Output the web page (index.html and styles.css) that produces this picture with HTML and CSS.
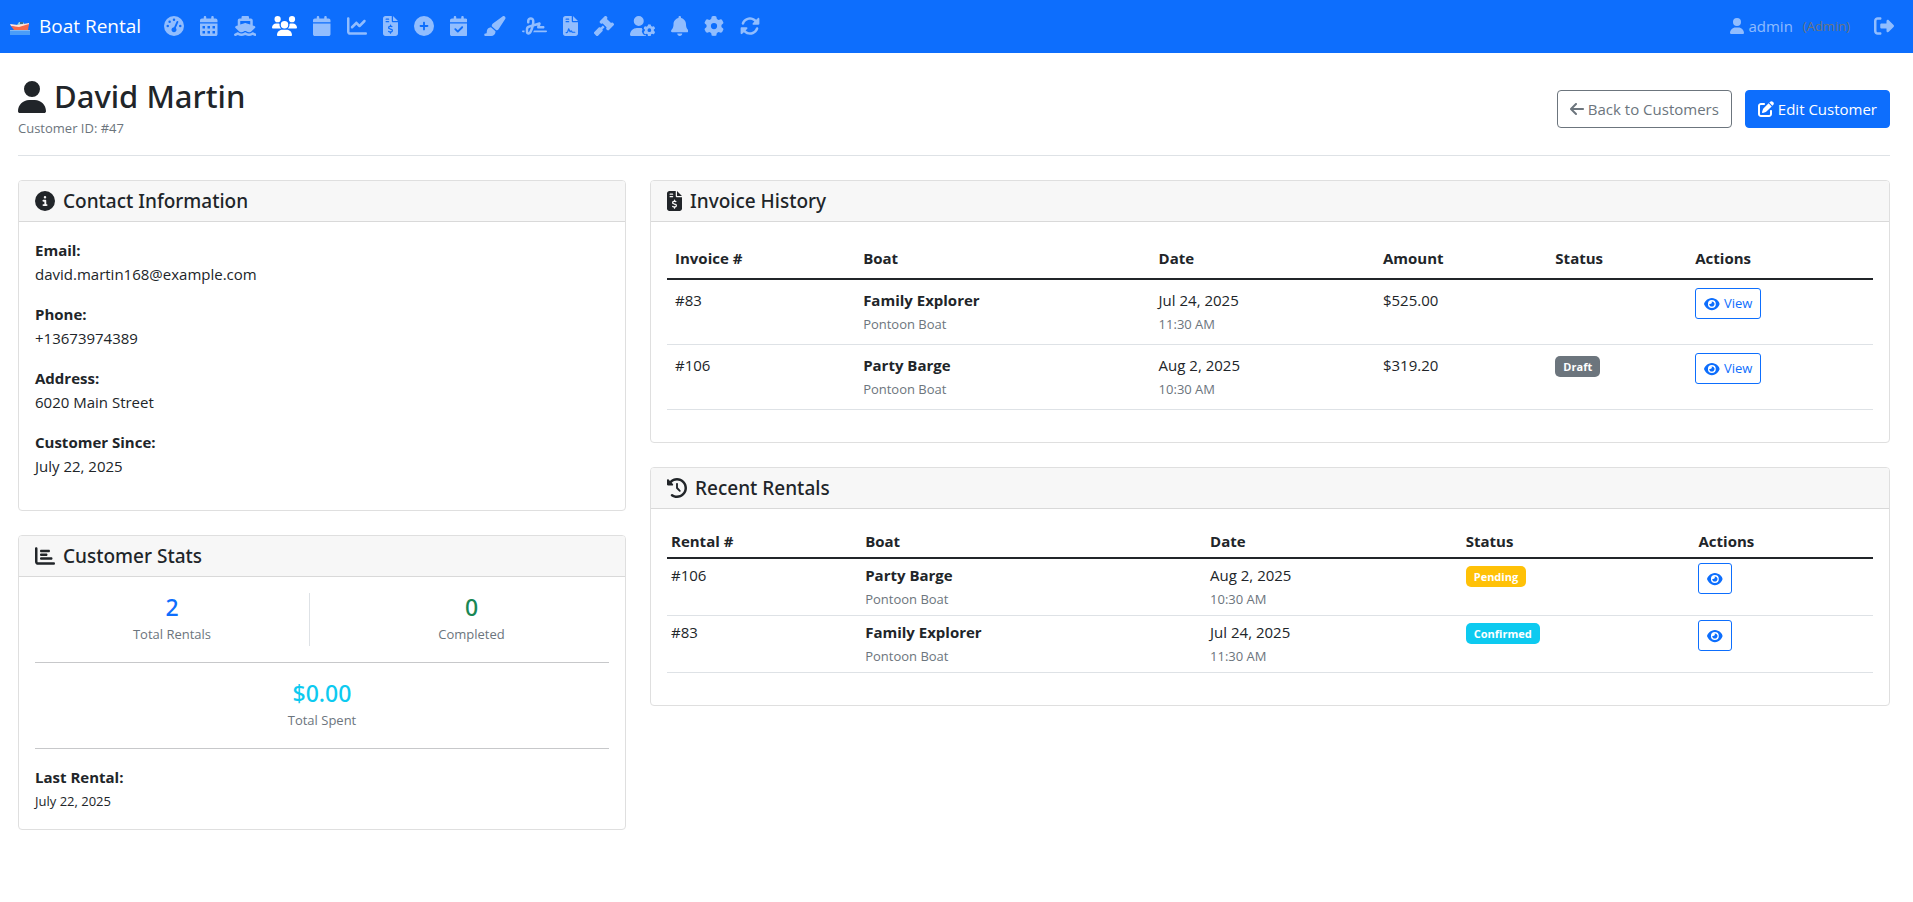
FILE: index.html
```html
<!DOCTYPE html>
<html lang="en">
<head>
    <meta charset="UTF-8">
    <meta name="viewport" content="width=device-width, initial-scale=1.0">
    <title>David Martin - Boat Rental</title>
    <link rel="stylesheet" href="styles.css">
</head>
<body>
<svg class="icon-defs" aria-hidden="true">
    <symbol id="i-user" viewBox="0 0 448 512"><path d="M224 256A128 128 0 1 0 224 0a128 128 0 1 0 0 256zm-45.7 48C79.8 304 0 383.8 0 482.3C0 498.7 13.3 512 29.7 512H418.3c16.4 0 29.7-13.3 29.7-29.7C448 383.8 368.2 304 269.7 304H178.3z"/></symbol>
    <symbol id="i-invoice" viewBox="0 0 384 512"><path d="M64 0C28.7 0 0 28.7 0 64V448c0 35.3 28.7 64 64 64H320c35.3 0 64-28.7 64-64V160H256c-17.7 0-32-14.3-32-32V0H64zM256 0V128H384L256 0zM64 80c0-8.8 7.2-16 16-16h64c8.8 0 16 7.2 16 16s-7.2 16-16 16H80c-8.8 0-16-7.2-16-16zm0 64c0-8.8 7.2-16 16-16h64c8.8 0 16 7.2 16 16s-7.2 16-16 16H80c-8.8 0-16-7.2-16-16zm128 72c8.8 0 16 7.2 16 16v17.3c8.5 1.2 16.7 3.1 24.1 5.1c8.5 2.3 13.6 11 11.3 19.6s-11 13.6-19.6 11.3c-11.1-3-22-5.2-32.1-5.3c-8.4-.1-17.4 1.8-23.6 5.5c-5.7 3.4-8.1 7.3-8.1 12.8c0 3.7 1.3 6.5 7.3 10.1c6.9 4.1 16.6 7.1 29.2 10.9l.5 .1c11.3 3.4 25.3 7.6 36.3 14.6c12.1 7.6 22.4 19.7 22.7 38.2c.3 19.3-9.6 33.3-22.9 41.6c-7.7 4.8-16.4 7.6-25.1 9.1V440c0 8.8-7.2 16-16 16s-16-7.2-16-16V422.2c-11.2-2.1-21.7-5.7-30.9-8.9c-2.1-.7-4.2-1.4-6.2-2.1c-8.4-2.8-12.9-11.9-10.1-20.2s11.9-12.9 20.2-10.1c2.5 .8 4.8 1.6 7.1 2.4c13.6 4.6 24.6 8.4 36.3 8.7c9.1 .3 17.9-1.7 23.7-5.3c5.1-3.2 7.9-7.3 7.8-14c-.1-4.6-1.8-7.8-7.7-11.6c-6.8-4.3-16.5-7.4-29-11.2l-1.6-.5c-11-3.3-24.3-7.3-34.8-13.7c-12-7.2-22.6-18.9-22.7-37.3c-.1-19.4 10.8-32.8 23.8-40.5c7.5-4.4 15.8-7.2 24.1-8.7V232c0-8.8 7.2-16 16-16z"/></symbol>
    <symbol id="i-eye" viewBox="0 0 576 512"><path d="M288 32c-80.8 0-145.5 36.8-192.6 80.6C48.6 156 17.3 208 2.5 243.7c-3.3 7.9-3.3 16.7 0 24.6C17.3 304 48.6 356 95.4 399.4C142.5 443.2 207.2 480 288 480s145.5-36.8 192.6-80.6c46.8-43.5 78.1-95.4 93-131.1c3.3-7.9 3.3-16.7 0-24.6c-14.9-35.7-46.2-87.7-93-131.1C433.5 68.8 368.8 32 288 32zM144 256a144 144 0 1 1 288 0 144 144 0 1 1 -288 0zm144-64c0 35.3-28.7 64-64 64c-7.1 0-13.9-1.2-20.3-3.3c-5.5-1.8-11.9 1.6-11.7 7.4c.3 6.9 1.3 13.8 3.2 20.7c13.7 51.2 66.4 81.6 117.6 67.9s81.6-66.4 67.9-117.6c-11.1-41.5-47.8-69.4-88.6-71.1c-5.8-.2-9.2 6.1-7.4 11.7c2.1 6.4 3.3 13.2 3.3 20.3z"/></symbol>
    <symbol id="i-gear" viewBox="0 0 512 512"><path d="M495.9 166.6c3.2 8.7 .5 18.4-6.4 24.6l-43.3 39.4c1.1 8.3 1.7 16.8 1.7 25.4s-.6 17.1-1.7 25.4l43.3 39.4c6.9 6.2 9.6 15.9 6.4 24.6c-4.4 11.9-9.7 23.3-15.8 34.3l-4.7 8.1c-6.6 11-14 21.4-22.1 31.2c-5.9 7.2-15.7 9.6-24.5 6.8l-55.7-17.7c-13.4 10.3-28.2 18.9-44 25.4l-12.5 57.1c-2 9.1-9 16.3-18.2 17.8c-13.8 2.3-28 3.5-42.5 3.5s-28.7-1.2-42.5-3.5c-9.2-1.5-16.2-8.7-18.2-17.8l-12.5-57.1c-15.8-6.5-30.6-15.1-44-25.4L83.1 425.9c-8.8 2.8-18.6 .3-24.5-6.8c-8.1-9.8-15.5-20.2-22.1-31.2l-4.7-8.1c-6.1-11-11.4-22.4-15.8-34.3c-3.2-8.7-.5-18.4 6.4-24.6l43.3-39.4C64.6 273.1 64 264.6 64 256s.6-17.1 1.7-25.4L22.4 191.2c-6.9-6.2-9.6-15.9-6.4-24.6c4.4-11.9 9.7-23.3 15.8-34.3l4.7-8.1c6.6-11 14-21.4 22.1-31.2c5.9-7.2 15.7-9.6 24.5-6.8l55.7 17.7c13.4-10.3 28.2-18.9 44-25.4l12.5-57.1c2-9.1 9-16.3 18.2-17.8C227.3 1.2 241.5 0 256 0s28.7 1.2 42.5 3.5c9.2 1.5 16.2 8.7 18.2 17.8l12.5 57.1c15.8 6.5 30.6 15.1 44 25.4l55.7-17.7c8.8-2.8 18.6-.3 24.5 6.8c8.1 9.8 15.5 20.2 22.1 31.2l4.7 8.1c6.1 11 11.4 22.4 15.8 34.3zM256 336a80 80 0 1 0 0-160 80 80 0 1 0 0 160z"/></symbol>
</svg>

<nav class="navbar">
    <a class="brand" href="#">
        <svg class="brand-boat" viewBox="0 0 20 20" aria-hidden="true">
            <path fill="#4a9df8" d="M0 14h20v5H0z"/>
            <path fill="#7fb8f5" d="M0 14h20v1H0z"/>
            <path fill="#8fd3dc" d="M7 9l2-3h4l2 3z"/>
            <path fill="#3f6f8f" d="M10 6h3v2h-3z"/>
            <path fill="#ffe3da" d="M0 8l8 1 11-2v2L9 12 1 10z"/>
            <path fill="#f5694b" d="M1 10l8 1 10-3-1 6H4z"/>
        </svg>
        <span>Boat Rental</span>
    </a>
    <ul class="nav-links">
        <li><a href="#" aria-label="Dashboard"><svg viewBox="0 0 512 512"><path d="M0 256a256 256 0 1 1 512 0A256 256 0 1 1 0 256zM288 96a32 32 0 1 0 -64 0 32 32 0 1 0 64 0zM256 416c35.3 0 64-28.7 64-64c0-17.4-6.9-33.1-18.1-44.6L366 161.7c5.3-12.1-.2-26.3-12.3-31.6s-26.3 .2-31.6 12.3L257.9 288c-.6 0-1.3 0-1.9 0c-35.3 0-64 28.7-64 64s28.7 64 64 64zM176 144a32 32 0 1 0 -64 0 32 32 0 1 0 64 0zM96 288a32 32 0 1 0 0-64 32 32 0 1 0 0 64zm352-32a32 32 0 1 0 -64 0 32 32 0 1 0 64 0z"/></svg></a></li>
        <li><a href="#" aria-label="Bookings"><svg viewBox="0 0 448 512"><path fill-rule="evenodd" d="M128 0c17.7 0 32 14.3 32 32V64H288V32c0-17.7 14.3-32 32-32s32 14.3 32 32V64h48c26.5 0 48 21.5 48 48v48H0V112C0 85.5 21.5 64 48 64H96V32c0-17.7 14.3-32 32-32zM0 192H448V464c0 26.5-21.5 48-48 48H48c-26.5 0-48-21.5-48-48V192zM64 256h64v64H64zM192 256h64v64h-64zM320 256h64v64h-64zM64 384h64v64H64zM192 384h64v64h-64zM320 384h64v64h-64z"/></svg></a></li>
        <li><a href="#" aria-label="Boats"><svg viewBox="0 0 576 512"><path d="M192 32c0-17.7 14.3-32 32-32H352c17.7 0 32 14.3 32 32V64h48c26.5 0 48 21.5 48 48V240l44.4 14.8c23.1 7.7 29.5 37.5 11.5 53.9l-101 92.6c-16.2 9.4-34.7 15.1-50.9 15.1c-19.6 0-40.8-7.7-59.2-20.3c-22.1-15.5-51.6-15.5-73.7 0c-17.1 11.8-38 20.3-59.2 20.3c-16.2 0-34.7-5.7-50.9-15.1l-101-92.6c-18-16.5-11.6-46.2 11.5-53.9L96 240V112c0-26.5 21.5-48 48-48h48V32zM160 218.7l107.8-35.9c13.1-4.4 27.3-4.4 40.5 0L416 218.7V128H160v90.7zM306.5 421.9C329 437.4 356.5 448 384 448c26.9 0 55.4-10.8 77.4-26.1c11.9-8.5 28.1-7.8 39.2 1.7c14.4 11.9 32.5 21 50.6 25.2c17.2 4 27.9 21.2 23.9 38.4s-21.2 27.9-38.4 23.9c-24.5-5.7-44.9-16.5-58.2-25C449.5 501.7 417 512 384 512c-31.9 0-60.6-9.9-80.4-18.9c-5.8-2.7-11.1-5.3-15.6-7.7c-4.5 2.4-9.7 5.1-15.6 7.7c-19.8 9-48.5 18.9-80.4 18.9c-33 0-65.5-10.3-94.5-25.8c-13.4 8.4-33.7 19.3-58.2 25c-17.2 4-34.4-6.7-38.4-23.9s6.7-34.4 23.9-38.4c18.1-4.2 36.2-13.3 50.6-25.2c11.1-9.4 27.3-10.1 39.2-1.7C136.7 437.2 165.1 448 192 448c27.5 0 55-10.6 77.5-26.1c11.1-7.9 25.9-7.9 37 0z"/></svg></a></li>
        <li><a href="#" class="active" aria-label="Customers"><svg viewBox="0 0 640 512"><path d="M144 0a80 80 0 1 1 0 160A80 80 0 1 1 144 0zM512 0a80 80 0 1 1 0 160A80 80 0 1 1 512 0zM0 298.7C0 239.8 47.8 192 106.7 192h42.7c15.9 0 31 3.5 44.6 9.7c-1.3 7.2-1.9 14.7-1.9 22.3c0 38.2 16.8 72.5 43.3 96H21.3C9.6 320 0 310.4 0 298.7zM405.3 320c26.6-23.5 43.3-57.8 43.3-96c0-7.6-.7-15-1.9-22.3c13.6-6.3 28.7-9.7 44.6-9.7h42.7C592.2 192 640 239.8 640 298.7c0 11.8-9.6 21.3-21.3 21.3H405.3zM224 224a96 96 0 1 1 192 0 96 96 0 1 1 -192 0zM128 485.3C128 411.7 187.7 352 261.3 352H378.7C452.3 352 512 411.7 512 485.3c0 14.7-11.9 26.7-26.7 26.7H154.7c-14.7 0-26.7-11.9-26.7-26.7z"/></svg></a></li>
        <li><a href="#" aria-label="Calendar"><svg viewBox="0 0 448 512"><path d="M96 32V64H48C21.5 64 0 85.5 0 112v48H448V112c0-26.5-21.5-48-48-48H352V32c0-17.7-14.3-32-32-32s-32 14.3-32 32V64H160V32c0-17.7-14.3-32-32-32S96 14.3 96 32zM448 192H0V464c0 26.5 21.5 48 48 48H400c26.5 0 48-21.5 48-48V192z"/></svg></a></li>
        <li><a href="#" aria-label="Reports"><svg viewBox="0 0 512 512"><path d="M64 64c0-17.7-14.3-32-32-32S0 46.3 0 64V400c0 44.2 35.8 80 80 80H480c17.7 0 32-14.3 32-32s-14.3-32-32-32H80c-8.8 0-16-7.2-16-16V64zm406.6 86.6c12.5-12.5 12.5-32.8 0-45.3s-32.8-12.5-45.3 0L320 210.7l-57.4-57.4c-12.5-12.5-32.8-12.5-45.3 0l-112 112c-12.5 12.5-12.5 32.8 0 45.3s32.8 12.5 45.3 0L240 221.3l57.4 57.4c12.5 12.5 32.8 12.5 45.3 0l128-128z"/></svg></a></li>
        <li><a href="#" aria-label="Invoices"><svg viewBox="0 0 384 512"><use href="#i-invoice"/></svg></a></li>
        <li><a href="#" aria-label="New rental"><svg viewBox="0 0 512 512"><path d="M256 512A256 256 0 1 0 256 0a256 256 0 1 0 0 512zM232 344V280H168c-13.3 0-24-10.7-24-24s10.7-24 24-24h64V168c0-13.3 10.7-24 24-24s24 10.7 24 24v64h64c13.3 0 24 10.7 24 24s-10.7 24-24 24H280v64c0 13.3-10.7 24-24 24s-24-10.7-24-24z"/></svg></a></li>
        <li><a href="#" aria-label="Availability"><svg viewBox="0 0 448 512"><path d="M128 0c17.7 0 32 14.3 32 32V64H288V32c0-17.7 14.3-32 32-32s32 14.3 32 32V64h48c26.5 0 48 21.5 48 48v48H0V112C0 85.5 21.5 64 48 64H96V32c0-17.7 14.3-32 32-32zM0 192H448V464c0 26.5-21.5 48-48 48H48c-26.5 0-48-21.5-48-48V192zM329 305c9.4-9.4 9.4-24.6 0-33.9s-24.6-9.4-33.9 0l-95 95-47-47c-9.4-9.4-24.6-9.4-33.9 0s-9.4 24.6 0 33.9l64 64c9.4 9.4 24.6 9.4 33.9 0L329 305z"/></svg></a></li>
        <li><a href="#" aria-label="Appearance"><svg viewBox="0 0 576 512"><path d="M339.3 367.1c27.3-3.9 51.9-19.4 67.2-42.9L568.2 74.1c12.6-19.5 9.4-45.3-7.6-61.2S517.7-4.4 499.1 9.6L262.4 187.2c-24 18-38.2 46.1-38.4 76.1L339.3 367.1zm-19.6 25.4l-116-104.4C143.9 290.3 96 339.6 96 400c0 3.9 .2 7.8 .6 11.6C98.4 429.1 86.4 448 68.8 448H64c-17.7 0-32 14.3-32 32s14.3 32 32 32H208c61.9 0 112-50.1 112-112c0-2.5-.1-5-.2-7.5z"/></svg></a></li>
        <li><a href="#" aria-label="Signatures"><svg viewBox="0 0 640 512"><path d="M192 128c0-17.7 14.3-32 32-32s32 14.3 32 32v7.8c0 27.7-2.4 55.3-7.1 82.5l-84.4 25.3c-40.6 12.2-68.4 49.6-68.4 92v71.9c0 40 32.5 72.5 72.5 72.5c26 0 50-13.9 62.9-36.5l13.9-24.3c26.8-47 46.5-97.7 58.4-150.5l94.4-28.3-12.5 37.5c-3.3 9.8-1.6 20.5 4.4 28.8s15.7 13.3 26 13.3H544c17.7 0 32-14.3 32-32s-14.3-32-32-32H460.4l18-53.9c3.8-11.3 .9-23.8-7.4-32.4s-20.7-11.8-32.2-8.4L316.4 198.1c2.4-20.7 3.6-41.4 3.6-62.3V128c0-53-43-96-96-96s-96 43-96 96v32c0 17.7 14.3 32 32 32s32-14.3 32-32V128zm-9.2 177l49-14.7c-10.4 33.8-24.5 66.4-42.1 97.2l-13.9 24.3c-1.5 2.6-4.3 4.3-7.4 4.3c-4.7 0-8.5-3.8-8.5-8.5V335.6c0-14.1 9.3-26.6 22.8-30.7zM24 368c-13.3 0-24 10.7-24 24s10.7 24 24 24H64.3c-.2-2.8-.3-5.6-.3-8.5V368H24zm592 48c13.3 0 24-10.7 24-24s-10.7-24-24-24H305.9c-6.7 16.3-14.2 32.3-22.3 48H616z"/></svg></a></li>
        <li><a href="#" aria-label="Contracts"><svg viewBox="0 0 384 512"><path fill-rule="evenodd" d="M64 0C28.7 0 0 28.7 0 64V448c0 35.3 28.7 64 64 64H320c35.3 0 64-28.7 64-64V160H256c-17.7 0-32-14.3-32-32V0H64zM256 0V128H384L256 0zM80 64h64a16 16 0 0 1 0 32H80a16 16 0 0 1 0-32zM80 128h64a16 16 0 0 1 0 32H80a16 16 0 0 1 0-32z"/><path class="cutout" d="M80 424h14c14 0 22-10 28-26l24-72 34 80 20-22c6-8 14-8 19 0l15 32h68"/></svg></a></li>
        <li><a href="#" aria-label="Rules"><svg viewBox="0 0 512 512"><path d="M318.6 9.4c-12.5-12.5-32.8-12.5-45.3 0l-120 120c-12.5 12.5-12.5 32.8 0 45.3l16 16c12.5 12.5 32.8 12.5 45.3 0l4-4L325.4 293.4l-4 4c-12.5 12.5-12.5 32.8 0 45.3l16 16c12.5 12.5 32.8 12.5 45.3 0l120-120c12.5-12.5 12.5-32.8 0-45.3l-16-16c-12.5-12.5-32.8-12.5-45.3 0l-4 4L330.6 74.6l4-4c12.5-12.5 12.5-32.8 0-45.3l-16-16zm-152 288c-12.5-12.5-32.8-12.5-45.3 0l-112 112c-12.5 12.5-12.5 32.8 0 45.3l48 48c12.5 12.5 32.8 12.5 45.3 0l112-112c12.5-12.5 12.5-32.8 0-45.3l-1.4-1.4L272 285.3 226.7 240 168 298.7l-1.4-1.4z"/></svg></a></li>
        <li><a href="#" aria-label="User management"><svg viewBox="0 0 640 512"><path d="M224 0a128 128 0 1 1 0 256A128 128 0 1 1 224 0zM178.3 304h91.4c11.8 0 23.4 1.2 34.5 3.3c-2.1 18.5 7.4 35.6 21.8 44.8c-16.6 10.6-26.7 31.6-20 53.3c4 12.9 9.4 25.5 16.4 37.6s15.2 23.1 24.4 33c15.7 16.9 39.6 18.4 57.2 8.7v.9c0 9.2 2.7 18.5 7.9 26.3H29.7C13.3 512 0 498.7 0 482.3C0 383.8 79.8 304 178.3 304z"/><use href="#i-gear" x="342" y="210" width="307" height="307"/></svg></a></li>
        <li><a href="#" aria-label="Notifications"><svg viewBox="0 0 448 512"><path d="M224 0c-17.7 0-32 14.3-32 32V51.2C119 66 64 130.6 64 208v18.8c0 47-17.3 92.4-48.5 127.6l-7.4 8.3c-8.4 9.4-10.4 22.9-5.3 34.4S19.4 416 32 416H416c12.6 0 24-7.4 29.2-18.9s3.1-25-5.3-34.4l-7.4-8.3C401.3 319.2 384 273.9 384 226.8V208c0-77.4-55-142-128-156.8V32c0-17.7-14.3-32-32-32zm45.3 493.3c12-12 18.7-28.3 18.7-45.3H224 160c0 17 6.7 33.3 18.7 45.3s28.3 18.7 45.3 18.7s33.3-6.7 45.3-18.7z"/></svg></a></li>
        <li><a href="#" aria-label="Settings"><svg viewBox="0 0 512 512"><use href="#i-gear"/></svg></a></li>
        <li><a href="#" aria-label="Sync"><svg viewBox="0 0 512 512"><path d="M142.9 142.9c62.2-62.2 162.7-62.5 225.3-1L327 183c-6.9 6.9-8.9 17.2-5.2 26.2s12.5 14.8 22.2 14.8H472c13.3 0 24-10.7 24-24V72c0-9.7-5.8-18.5-14.8-22.2s-19.3-1.7-26.2 5.2L413.4 96.6c-87.6-86.5-228.7-86.2-315.8 1C73.2 122 55.6 150.7 44.8 181.4c-5.9 16.7 2.9 34.9 19.5 40.8s34.9-2.9 40.8-19.5c7.7-21.8 20.2-42.3 37.8-59.8zM16 312V440c0 9.7 5.8 18.5 14.8 22.2s19.3 1.7 26.2-5.2l41.6-41.6c87.6 86.5 228.7 86.2 315.8-1c24.4-24.4 42.1-53.1 52.9-83.7c5.9-16.7-2.9-34.9-19.5-40.8s-34.9 2.9-40.8 19.5c-7.7 21.8-20.2 42.3-37.8 59.8c-62.2 62.2-162.7 62.5-225.3 1L185 329c6.9-6.9 8.9-17.2 5.2-26.2s-12.5-14.8-22.2-14.8H40c-13.3 0-24 10.7-24 24z"/></svg></a></li>
    </ul>
    <div class="nav-user">
        <span class="user-name"><svg viewBox="0 0 448 512" aria-hidden="true"><use href="#i-user"/></svg>admin</span>
        <span class="user-role">(Admin)</span>
        <a class="logout" href="#" aria-label="Logout"><svg viewBox="0 0 512 512"><path d="M377.9 105.9L500.7 228.7c7.2 7.2 11.3 17.1 11.3 27.3s-4.1 20.1-11.3 27.3L377.9 406.1c-6.4 6.4-15 9.9-24 9.9c-18.7 0-33.9-15.2-33.9-33.9l0-62.1-128 0c-17.7 0-32-14.3-32-32l0-64c0-17.7 14.3-32 32-32l128 0 0-62.1c0-18.7 15.2-33.9 33.9-33.9c9 0 17.6 3.6 24 9.9zM160 96L96 96c-17.7 0-32 14.3-32 32l0 256c0 17.7 14.3 32 32 32l64 0c17.7 0 32 14.3 32 32s-14.3 32-32 32l-64 0c-53 0-96-43-96-96L0 128C0 75 43 32 96 32l64 0c17.7 0 32 14.3 32 32s-14.3 32-32 32z"/></svg></a>
    </div>
</nav>

<main class="page">
    <header class="page-header">
        <div>
            <h1><svg viewBox="0 0 448 512" aria-hidden="true"><use href="#i-user"/></svg>David Martin</h1>
            <p class="small muted">Customer ID: #47</p>
        </div>
        <div class="page-actions">
            <a class="btn btn-secondary" href="#"><svg viewBox="0 0 448 512" aria-hidden="true"><path d="M9.4 233.4c-12.5 12.5-12.5 32.8 0 45.3l160 160c12.5 12.5 32.8 12.5 45.3 0s12.5-32.8 0-45.3L109.2 288 416 288c17.7 0 32-14.3 32-32s-14.3-32-32-32l-306.7 0L214.6 118.6c12.5-12.5 12.5-32.8 0-45.3s-32.8-12.5-45.3 0l-160 160z"/></svg>Back to Customers</a>
            <a class="btn btn-primary" href="#"><svg viewBox="0 0 512 512" aria-hidden="true"><path d="M471.6 21.7c-21.9-21.9-57.3-21.9-79.2 0L362.3 51.7l97.9 97.9 30.1-30.1c21.9-21.9 21.9-57.3 0-79.2L471.6 21.7zm-299.2 220c-6.1 6.1-10.8 13.6-13.5 21.9l-29.6 88.8c-2.9 8.6-.6 18.1 5.8 24.6s15.9 8.7 24.6 5.8l88.8-29.6c8.2-2.7 15.7-7.4 21.9-13.5L437.7 172.3 339.7 74.3 172.4 241.7zM96 64C43 64 0 107 0 160V416c0 53 43 96 96 96H352c53 0 96-43 96-96V320c0-17.7-14.3-32-32-32s-32 14.3-32 32v96c0 17.7-14.3 32-32 32H96c-17.7 0-32-14.3-32-32V160c0-17.7 14.3-32 32-32h96c17.7 0 32-14.3 32-32s-14.3-32-32-32H96z"/></svg>Edit Customer</a>
        </div>
    </header>

    <div class="columns">
        <div class="column">
            <section class="card">
                <h2 class="card-header"><svg viewBox="0 0 512 512" aria-hidden="true"><path d="M256 512A256 256 0 1 0 256 0a256 256 0 1 0 0 512zM216 336h24V272H216c-13.3 0-24-10.7-24-24s10.7-24 24-24h48c13.3 0 24 10.7 24 24v88h8c13.3 0 24 10.7 24 24s-10.7 24-24 24H216c-13.3 0-24-10.7-24-24s10.7-24 24-24zm40-208a32 32 0 1 1 0 64 32 32 0 1 1 0-64z"/></svg>Contact Information</h2>
                <div class="card-body">
                    <p class="field"><strong>Email:</strong><br>david.martin168@example.com</p>
                    <p class="field"><strong>Phone:</strong><br>+13673974389</p>
                    <p class="field"><strong>Address:</strong><br>6020 Main Street</p>
                    <p class="field"><strong>Customer Since:</strong><br>July 22, 2025</p>
                </div>
            </section>

            <section class="card">
                <h2 class="card-header"><svg viewBox="0 0 512 512" aria-hidden="true"><path d="M32 32c17.7 0 32 14.3 32 32V400c0 8.8 7.2 16 16 16H480c17.7 0 32 14.3 32 32s-14.3 32-32 32H80c-44.2 0-80-35.8-80-80V64C0 46.3 14.3 32 32 32zm96 96c0-17.7 14.3-32 32-32l192 0c17.7 0 32 14.3 32 32s-14.3 32-32 32l-192 0c-17.7 0-32-14.3-32-32zm32 64H288c17.7 0 32 14.3 32 32s-14.3 32-32 32H160c-17.7 0-32-14.3-32-32s14.3-32 32-32zm0 96H416c17.7 0 32 14.3 32 32s-14.3 32-32 32H160c-17.7 0-32-14.3-32-32s14.3-32 32-32z"/></svg>Customer Stats</h2>
                <div class="card-body">
                    <div class="stats">
                        <div class="stat stat-divided">
                            <p class="stat-value text-primary">2</p>
                            <p class="small muted">Total Rentals</p>
                        </div>
                        <div class="stat">
                            <p class="stat-value text-success">0</p>
                            <p class="small muted">Completed</p>
                        </div>
                    </div>
                    <hr>
                    <div class="stat">
                        <p class="stat-value text-info">$0.00</p>
                        <p class="small muted">Total Spent</p>
                    </div>
                    <hr>
                    <p><strong>Last Rental:</strong></p>
                    <p class="small">July 22, 2025</p>
                </div>
            </section>
        </div>

        <div class="column">
            <section class="card">
                <h2 class="card-header"><svg viewBox="0 0 384 512" aria-hidden="true"><use href="#i-invoice"/></svg>Invoice History</h2>
                <div class="card-body">
                    <table class="table invoices">
                        <thead>
                            <tr>
                                <th>Invoice #</th>
                                <th>Boat</th>
                                <th>Date</th>
                                <th>Amount</th>
                                <th>Status</th>
                                <th>Actions</th>
                            </tr>
                        </thead>
                        <tbody>
                            <tr>
                                <td>#83</td>
                                <td><strong>Family Explorer</strong><span class="sub">Pontoon Boat</span></td>
                                <td>Jul 24, 2025<span class="sub">11:30 AM</span></td>
                                <td>$525.00</td>
                                <td></td>
                                <td><a class="btn btn-sm" href="#"><svg viewBox="0 0 576 512" aria-hidden="true"><use href="#i-eye"/></svg>View</a></td>
                            </tr>
                            <tr>
                                <td>#106</td>
                                <td><strong>Party Barge</strong><span class="sub">Pontoon Boat</span></td>
                                <td>Aug 2, 2025<span class="sub">10:30 AM</span></td>
                                <td>$319.20</td>
                                <td><span class="badge badge-draft">Draft</span></td>
                                <td><a class="btn btn-sm" href="#"><svg viewBox="0 0 576 512" aria-hidden="true"><use href="#i-eye"/></svg>View</a></td>
                            </tr>
                        </tbody>
                    </table>
                </div>
            </section>

            <section class="card">
                <h2 class="card-header"><svg viewBox="0 0 512 512" aria-hidden="true"><path d="M75 75L41 41C25.9 25.9 0 36.6 0 57.9V168c0 13.3 10.7 24 24 24H134.1c21.4 0 32.1-25.9 17-41l-30.8-30.8C155 85.5 203 64 256 64c106 0 192 86 192 192s-86 192-192 192c-40.8 0-78.6-12.7-109.7-34.4c-14.5-10.1-34.4-6.6-44.6 7.9s-6.6 34.4 7.9 44.6C151.2 495 201.7 512 256 512c141.4 0 256-114.6 256-256S397.4 0 256 0C185.3 0 121.3 28.7 75 75zm181 53c-13.3 0-24 10.7-24 24V256c0 6.4 2.5 12.5 7 17l72 72c9.4 9.4 24.6 9.4 33.9 0s9.4-24.6 0-33.9l-65-65V152c0-13.3-10.7-24-24-24z"/></svg>Recent Rentals</h2>
                <div class="card-body">
                    <table class="table table-sm rentals">
                        <thead>
                            <tr>
                                <th>Rental #</th>
                                <th>Boat</th>
                                <th>Date</th>
                                <th>Status</th>
                                <th>Actions</th>
                            </tr>
                        </thead>
                        <tbody>
                            <tr>
                                <td>#106</td>
                                <td><strong>Party Barge</strong><span class="sub">Pontoon Boat</span></td>
                                <td>Aug 2, 2025<span class="sub">10:30 AM</span></td>
                                <td><span class="badge badge-pending">Pending</span></td>
                                <td><a class="btn btn-sm" href="#" aria-label="View rental 106"><svg viewBox="0 0 576 512"><use href="#i-eye"/></svg></a></td>
                            </tr>
                            <tr>
                                <td>#83</td>
                                <td><strong>Family Explorer</strong><span class="sub">Pontoon Boat</span></td>
                                <td>Jul 24, 2025<span class="sub">11:30 AM</span></td>
                                <td><span class="badge badge-confirmed">Confirmed</span></td>
                                <td><a class="btn btn-sm" href="#" aria-label="View rental 83"><svg viewBox="0 0 576 512"><use href="#i-eye"/></svg></a></td>
                            </tr>
                        </tbody>
                    </table>
                </div>
            </section>
        </div>
    </div>
</main>
</body>
</html>
```

FILE: styles.css
```css
* {
    box-sizing: border-box;
}

body {
    margin: 0;
    background: #fff;
    color: #212529;
    font-family: "Open Sans", "Noto Sans", sans-serif;
    font-size: 15px;
    line-height: 24px;
}

h1, h2, p, ul {
    margin: 0;
    padding: 0;
}

a {
    text-decoration: none;
}

strong, th {
    font-weight: 700;
}

svg {
    display: block;
    fill: currentColor;
    flex: none;
}

.icon-defs {
    display: none;
}

.small {
    font-size: 13px;
}

.muted {
    color: #6c757d;
}

/* navbar */
.navbar {
    display: flex;
    align-items: center;
    min-height: 53px;
    padding: 0 19px 2px 10px;
    background: #0d6efd;
}

.brand {
    display: flex;
    align-items: center;
    gap: 9px;
    margin-right: 15px;
    color: #fff;
    font-size: 19px;
}

.brand-boat {
    width: 20px;
    height: 20px;
}

.nav-links {
    display: flex;
    list-style: none;
}

.nav-links a {
    display: block;
    padding: 8px;
    color: rgba(255, 255, 255, .55);
}

.nav-links a.active {
    color: #fff;
}

.nav-links svg,
.logout svg {
    height: 20px;
}

.cutout {
    fill: none;
    stroke: #0d6efd;
    stroke-width: 30;
    stroke-linecap: round;
    stroke-linejoin: round;
}

.nav-user {
    display: flex;
    align-items: center;
    margin-left: auto;
    color: rgba(255, 255, 255, .55);
}

.user-name {
    display: flex;
    align-items: center;
    gap: 4px;
}

.user-name svg {
    height: 16px;
}

.user-role {
    margin-left: 10px;
    color: #6c757d;
    font-size: 13px;
}

.logout {
    margin-left: 24px;
    color: inherit;
}

/* page header */
.page {
    padding: 24px 23px 24px 18px;
}

.page-header {
    display: flex;
    align-items: center;
    justify-content: space-between;
    margin-bottom: 24px;
    padding-bottom: 15px;
    border-bottom: 1px solid #dee2e6;
}

h1,
.card-header,
.stat-value {
    font-family: "Noto Sans", "Open Sans", sans-serif;
    font-weight: 500;
}

h1 {
    display: flex;
    align-items: center;
    gap: 8px;
    font-size: 31px;
    line-height: 39px;
}

h1 svg {
    height: 32px;
}

.page-actions {
    display: flex;
    gap: 13px;
}

.btn {
    display: inline-flex;
    align-items: center;
    gap: 4px;
    padding: 6px 12px;
    border: 1px solid #0d6efd;
    border-radius: 4px;
    color: #0d6efd;
}

.btn svg {
    height: 16px;
}

.btn-secondary {
    border-color: #6c757d;
    color: #6c757d;
}

.btn-primary {
    background: #0d6efd;
    color: #fff;
}

.btn-sm {
    min-height: 31px;
    padding: 4px 8px;
    border-radius: 3px;
    font-size: 13px;
    line-height: 21px;
    vertical-align: top;
}

.btn-sm svg {
    height: 14px;
}

/* cards */
.columns {
    display: grid;
    grid-template-columns: minmax(0, 608fr) minmax(0, 1240fr);
    gap: 24px;
    align-items: start;
}

.column {
    display: grid;
    gap: 24px;
}

.card {
    border: 1px solid #dfdfdf;
    border-radius: 4px;
    overflow: hidden;
}

.card-header {
    display: flex;
    align-items: center;
    gap: 8px;
    padding: 8px 16px;
    background: #f7f7f7;
    border-bottom: 1px solid #d9d9d9;
    font-size: 19px;
    line-height: 24px;
}

.card-header svg {
    height: 20px;
}

.card-body {
    padding: 16px;
}

.field {
    margin-bottom: 16px;
}

.stats {
    display: grid;
    grid-template-columns: 1fr 1fr;
    gap: 24px;
}

.stat {
    text-align: center;
}

.stat-divided {
    border-right: 1px solid #dee2e6;
}

.stat-value {
    font-size: 23px;
    line-height: 29px;
}

.text-primary {
    color: #0d6efd;
}

.text-success {
    color: #198754;
}

.text-info {
    color: #0dcaf0;
}

hr {
    margin: 16px 0;
    border: 0;
    border-top: 1px solid #c7c8ca;
}

/* tables */
.table {
    width: 100%;
    margin-bottom: 16px;
    border-collapse: separate;
    border-spacing: 0;
    table-layout: fixed;
}

.table th,
.table td {
    padding: 8px;
    border-bottom: 1px solid #dee2e6;
    text-align: left;
    vertical-align: top;
}

.table th {
    border-bottom: 2px solid #212529;
}

.table-sm th,
.table-sm td {
    padding: 4px;
}

.sub {
    display: block;
    color: #6c757d;
    font-size: 13px;
}

.invoices th:nth-child(1) { width: 15.6%; }
.invoices th:nth-child(2) { width: 24.5%; }
.invoices th:nth-child(3) { width: 18.6%; }
.invoices th:nth-child(4) { width: 14.3%; }
.invoices th:nth-child(5) { width: 11.6%; }

.rentals th:nth-child(1) { width: 16.1%; }
.rentals th:nth-child(2) { width: 28.6%; }
.rentals th:nth-child(3) { width: 21.2%; }
.rentals th:nth-child(4) { width: 19.3%; }

.badge {
    display: inline-block;
    margin-top: 3px;
    padding: 0 8px;
    border-radius: 5px;
    color: #fff;
    font-size: 11px;
    font-weight: 700;
    line-height: 21px;
    vertical-align: top;
}

.badge-draft {
    background: #6c757d;
}

.badge-pending {
    background: #ffc107;
}

.badge-confirmed {
    background: #0dcaf0;
}
```
